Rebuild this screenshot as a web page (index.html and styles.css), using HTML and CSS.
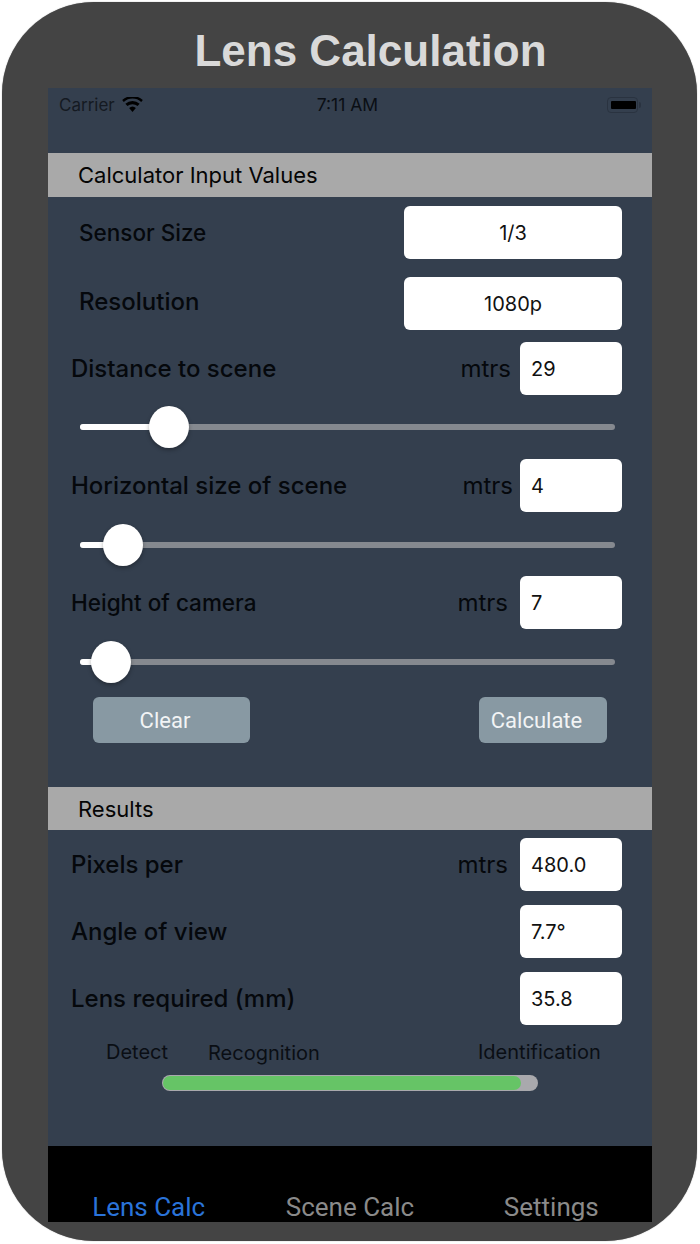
FILE: index.html
```html
<!DOCTYPE html>
<html lang="en">
<head>
<meta charset="utf-8">
<title>Lens Calculation</title>
<link rel="stylesheet" href="styles.css">
</head>
<body>
<div class="device">
  <h1 class="title">Lens Calculation</h1>
  <main class="screen">
    <div class="status">
      <div class="status-left">
        <span>Carrier</span>
        <svg class="wifi" viewBox="0 0 22 16" aria-hidden="true"><path d="M11 16l-3.6-4.2a5.4 5.4 0 0 1 7.2 0zM5.6 9.7L3.4 7.2a11.6 11.6 0 0 1 15.2 0l-2.2 2.5a8.2 8.2 0 0 0-10.800 0zM1.700 5.200L0 3.100a16.800 16.800 0 0 1 22 0l-1.700 2.100a13.800 13.800 0 0 0-18.600 0z"/></svg>
      </div>
      <span class="status-time">7:11 AM</span>
      <div class="battery"><span class="battery-fill"></span></div>
    </div>

    <div class="section-head">Calculator Input Values</div>

    <div class="select-row first">
      <span class="label label-small">Sensor Size</span>
      <div class="select-box">1/3</div>
    </div>
    <div class="select-row second">
      <span class="label">Resolution</span>
      <div class="select-box">1080p</div>
    </div>

    <div class="field-row distance">
      <span class="label">Distance to scene</span>
      <span class="unit">mtrs</span>
      <div class="input-box">29</div>
    </div>
    <div class="slider s1"><div class="slider-fill" style="width:16.6%"><span class="thumb"></span></div></div>

    <div class="field-row horiz">
      <span class="label">Horizontal size of scene</span>
      <span class="unit unit-wide">mtrs</span>
      <div class="input-box">4</div>
    </div>
    <div class="slider s2"><div class="slider-fill" style="width:8%"><span class="thumb"></span></div></div>

    <div class="field-row height">
      <span class="label label-small">Height of camera</span>
      <span class="unit unit-tight">mtrs</span>
      <div class="input-box">7</div>
    </div>
    <div class="slider s3"><div class="slider-fill" style="width:5.8%"><span class="thumb"></span></div></div>

    <div class="actions">
      <button class="btn btn-clear">Clear</button>
      <button class="btn btn-calc">Calculate</button>
    </div>

    <div class="section-head results-head">Results</div>

    <div class="field-row pixels">
      <span class="label">Pixels per</span>
      <span class="unit unit-tight">mtrs</span>
      <div class="input-box">480.0</div>
    </div>
    <div class="field-row angle">
      <span class="label">Angle of view</span>
      <div class="input-box">7.7°</div>
    </div>
    <div class="field-row lens">
      <span class="label">Lens required (mm)</span>
      <div class="input-box">35.8</div>
    </div>

    <div class="scale">
      <span class="scale-detect">Detect</span>
      <span class="scale-recog">Recognition</span>
      <span class="scale-ident">Identification</span>
    </div>
    <div class="progress"><div class="progress-fill" style="width:95.8%"></div></div>

    <nav class="tabs">
      <span class="tab active">Lens Calc</span>
      <span class="tab">Scene Calc</span>
      <span class="tab">Settings</span>
    </nav>
  </main>
</div>
</body>
</html>
```
FILE: styles.css
```css
* { box-sizing: border-box; }
html, body { margin: 0; padding: 0; }
body {
  width: 700px;
  height: 1244px;
  background: #fff;
  padding: 2px 3px 3px 2px;
  font-family: Inter, "Liberation Sans", Arial, sans-serif;
  overflow: hidden;
}
.device {
  width: 695px;
  height: 1239px;
  background: #444444;
  border-radius: 92px;
  box-shadow: 0 0 1px #777;
  display: flex;
  flex-direction: column;
  align-items: center;
}
.title {
  margin: 0 0 0 42px;
  height: 86px;
  padding-top: 23px;
  font-family: "Liberation Sans", Arial, sans-serif;
  font-size: 44px;
  line-height: 52px;
  font-weight: 700;
  color: #d9d9d9;
}
.screen {
  width: 604px;
  height: 1134px;
  margin-left: 1px;
  background: #343f4e;
  display: flex;
  flex-direction: column;
  color: #05080c;
}
.status {
  height: 65px;
  padding: 6px 0 0 11px;
  display: flex;
  align-items: flex-start;
  font-size: 17px;
  line-height: 22px;
  color: #0a0e14;
}
.status-left { display: flex; align-items: center; gap: 7px; color: #141a22; }
.wifi { width: 21px; height: 15px; fill: #000; margin-top: -2px; }
.status-time { margin-left: 174px; font-size: 17.500px; }
.battery {
  margin: 3px 14px 0 auto;
  width: 31px;
  height: 16px;
  padding: 3px 1px 3px 3px;
  border: 1px solid #2a3340;
  border-radius: 4px;
  position: relative;
}
.battery::after {
  content: "";
  position: absolute;
  right: -4px;
  top: 4px;
  width: 2px;
  height: 6px;
  background: #2a3340;
  border-radius: 0 2px 2px 0;
}
.battery-fill { display: block; height: 100%; width: 100%; background: #000; border-radius: 1px; }
.section-head {
  height: 44px;
  padding-left: 30px;
  background: #a9a9a9;
  font-size: 22px;
  line-height: 45px;
  color: #050505;
}
.select-row {
  height: 53px;
  display: flex;
  align-items: center;
  justify-content: space-between;
  padding: 0 30px 0 31px;
}
.select-row.first { margin-top: 9px; }
.select-row.second { margin-top: 18px; }
.second .label { position: relative; top: -2px; }
.label { font-size: 24px; font-weight: 500; line-height: 30px; color: #05080c; }
.label-small { font-size: 22.500px; }
.select-box {
  width: 218px;
  height: 53px;
  background: #fff;
  border-radius: 6px;
  color: #111;
  font-size: 20px;
  line-height: 55px;
  text-align: center;
}
.field-row {
  height: 53px;
  display: flex;
  align-items: center;
  padding: 0 30px 0 23px;
}
.field-row .label { margin-right: auto; }
.unit { font-size: 24px; color: #05080c; margin-right: 9px; }
.unit-wide { margin-right: 7px; }
.unit-tight { margin-right: 12px; }
.input-box {
  width: 102px;
  height: 53px;
  padding-left: 11px;
  background: #fff;
  border-radius: 6px;
  color: #111;
  font-size: 20px;
  line-height: 55px;
}
.distance { margin-top: 12px; }
.slider {
  height: 6px;
  margin: 0 37px 0 32px;
  background: #85898f;
  border-radius: 3px;
}
.s1 { margin-top: 29px; margin-bottom: 29px; }
.s2 { margin-top: 30px; margin-bottom: 28px; }
.s3 { margin-top: 30px; }
.slider-fill {
  height: 100%;
  background: #fff;
  border-radius: 3px;
  position: relative;
}
.thumb {
  position: absolute;
  right: -20px;
  top: -18px;
  width: 40px;
  height: 42px;
  border-radius: 50%;
  background: #fff;
  box-shadow: 0 2px 4px rgba(0,0,0,.3);
}
.actions {
  height: 46px;
  margin-top: 32px;
  padding: 0 45px;
  display: flex;
  justify-content: space-between;
}
.btn {
  border: 0;
  padding: 0;
  height: 46px;
  background: #8899a3;
  border-radius: 6px;
  color: #f2f4f5;
  font-family: Roboto, sans-serif;
  font-size: 22px;
}
.btn-clear { width: 157px; padding-right: 13px; }
.btn-calc { width: 128px; padding-right: 13px; }
.results-head { margin-top: 44px; height: 43px; }
.pixels { margin-top: 8px; }
.angle, .lens { margin-top: 14px; }
.scale {
  position: relative;
  height: 28px;
  margin-top: 13px;
  font-size: 20px;
  line-height: 28px;
  color: #0a0e14;
}
.scale span { position: absolute; top: 0; }
.scale-detect { left: 58px; }
.scale .scale-recog { left: 160px; top: 1px; }
.scale-ident { left: 430px; }
.progress {
  width: 376px;
  height: 16px;
  margin: 9px 0 0 114px;
  background: #a9a9ad;
  border-radius: 8px;
  padding: 1px;
}
.progress-fill { height: 14px; background: #66c466; border-radius: 7px; }
.tabs {
  margin-top: auto;
  height: 76px;
  background: #000;
  display: flex;
  align-items: flex-end;
}
.tab {
  flex: 1;
  text-align: center;
  font-family: Roboto, sans-serif;
  font-size: 26px;
  line-height: 30px;
  color: #8a8a8a;
}
.tab.active { color: #2a73d9; }
```
